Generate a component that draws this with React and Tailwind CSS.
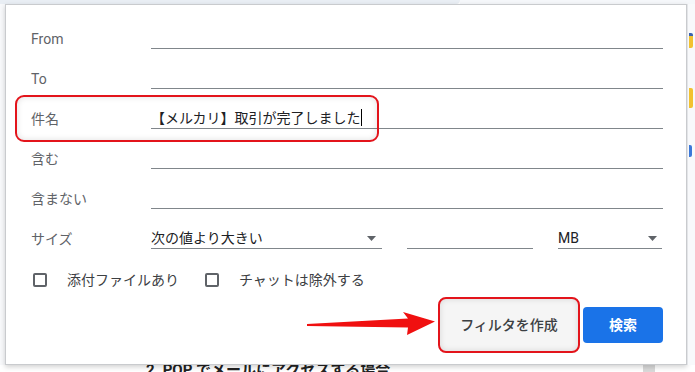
import React from "react"

function Row({ label, children }) {
  return (
    <div className="flex items-end h-[40px]">
      <div className="w-[120px] text-[14px] leading-[20px] text-[#5f6368]">{label}</div>
      <div className="flex-1">{children}</div>
    </div>
  )
}

function Line({ children, className = "" }) {
  return (
    <div className={`h-[21px] border-b border-[#80868b] text-[14px] leading-[20px] text-[#202124] ${className}`}>
      {children}
    </div>
  )
}

function Caret() {
  return (
    <svg width="9" height="5" viewBox="0 0 9 5" className="shrink-0">
      <path d="M0 0 H9 L4.5 5 Z" fill="#5f6368" />
    </svg>
  )
}

function Checkbox({ label, className = "" }) {
  return (
    <div className={`flex items-center gap-[20px] ${className}`}>
      <div className="w-[14px] h-[14px] border-2 border-[#5f6368] rounded-[2px]"></div>
      <span className="text-[14px] text-[#3c4043]">{label}</span>
    </div>
  )
}

export default function App() {
  return (
    <div className="relative w-[695px] h-[372px] overflow-hidden bg-white font-['Roboto','Noto_Sans_CJK_JP',sans-serif]">
      {/* search bar edge behind the dialog */}
      <div className="flex h-[4px]">
        <div className="w-[460px] bg-[#e9eef4] rounded-br-[8px]"></div>
        <div className="flex-1 bg-[#f5f7fa]"></div>
      </div>

      <div className="relative z-10 flex h-[361px]">
        <div className="w-[5px] bg-[#f8f9fb]"></div>

        {/* dialog */}
        <div className="w-[682px] border border-[#c9cbce] bg-white shadow-[0_2px_5px_rgba(0,0,0,0.18)] pt-[4px] pl-[25px] pr-[23px]">
          <Row label="From"><Line /></Row>
          <Row label="To"><Line /></Row>
          <Row label="件名">
            <Line className="border-[#5b84b5] text-[14.8px]">
              【メルカリ】取引が完了しました<span className="inline-block w-px h-[17px] bg-black align-[-3px]"></span>
            </Line>
          </Row>
          <Row label="含む"><Line /></Row>
          <Row label="含まない"><Line /></Row>
          <Row label="サイズ">
            <div className="flex">
              <Line className="w-[231px] flex items-center justify-between pr-[6px]">
                <span>次の値より大きい</span>
                <Caret />
              </Line>
              <Line className="w-[126px] ml-[25px]" />
              <Line className="w-[104px] ml-[25px] flex items-center justify-between pr-[5px]">
                <span>MB</span>
                <Caret />
              </Line>
            </div>
          </Row>

          <div className="flex items-center h-[34px] mt-[14px] -ml-[25px]">
            <Checkbox label="添付ファイルあり" className="ml-[27px]" />
            <Checkbox label="チャットは除外する" className="ml-[26px]" />
          </div>

          <div className="flex justify-end items-center gap-[3px]">
            <div className="w-[142px] h-[56px] border-2 border-[#e3141b] rounded-[8px] bg-[#f5f5f5] shadow-[inset_0_0_6px_rgba(0,0,0,0.12)] flex items-center justify-center text-[14px] font-medium text-[#3c4043]">
              フィルタを作成
            </div>
            <button className="w-[80px] h-[36px] bg-[#1a73e8] rounded-[4px] text-white text-[14px] font-bold">
              検索
            </button>
          </div>
        </div>

        {/* page edge on the right */}
        <div className="flex-1 bg-[#f8f9fb] border-l border-[#e3e5e8] flex flex-col pl-[1px]">
          <div className="mt-[29px] w-[4px] h-[15px] rounded-r-[2px] bg-[#f2c230] border-t-[3px] border-[#3b63b0]"></div>
          <div className="mt-[40px] w-[4px] h-[20px] rounded-r-[2px] bg-[#f2c230]"></div>
          <div className="mt-[37px] w-[3px] h-[12px] rounded-r-[2px] bg-[#3b78d8]"></div>
        </div>
      </div>

      {/* article text behind */}
      <div className="relative -mt-[4px] flex">
        <div className="pl-[146px] text-[15px] leading-[18px] font-bold text-[#222]">
          2. POP でメールにアクセスする場合
        </div>
        <div className="ml-auto mr-[40px] mt-[4px] w-[12px] h-[10px] bg-[#d9d9d9]"></div>
      </div>

      {/* annotations */}
      <div className="absolute left-[15px] top-[95px] w-[364px] h-[47px] z-20 border-2 border-[#e3141b] rounded-[9px] shadow-[inset_0_0_6px_rgba(0,0,0,0.12)]"></div>
      <svg className="absolute left-[300px] top-[305px] z-20" width="140" height="35" viewBox="0 0 140 35">
        <polygon points="7,19 108,13.5 103,7 135,16.5 107,30 108,22.5 7,21" fill="#f01010" />
      </svg>
    </div>
  )
}
